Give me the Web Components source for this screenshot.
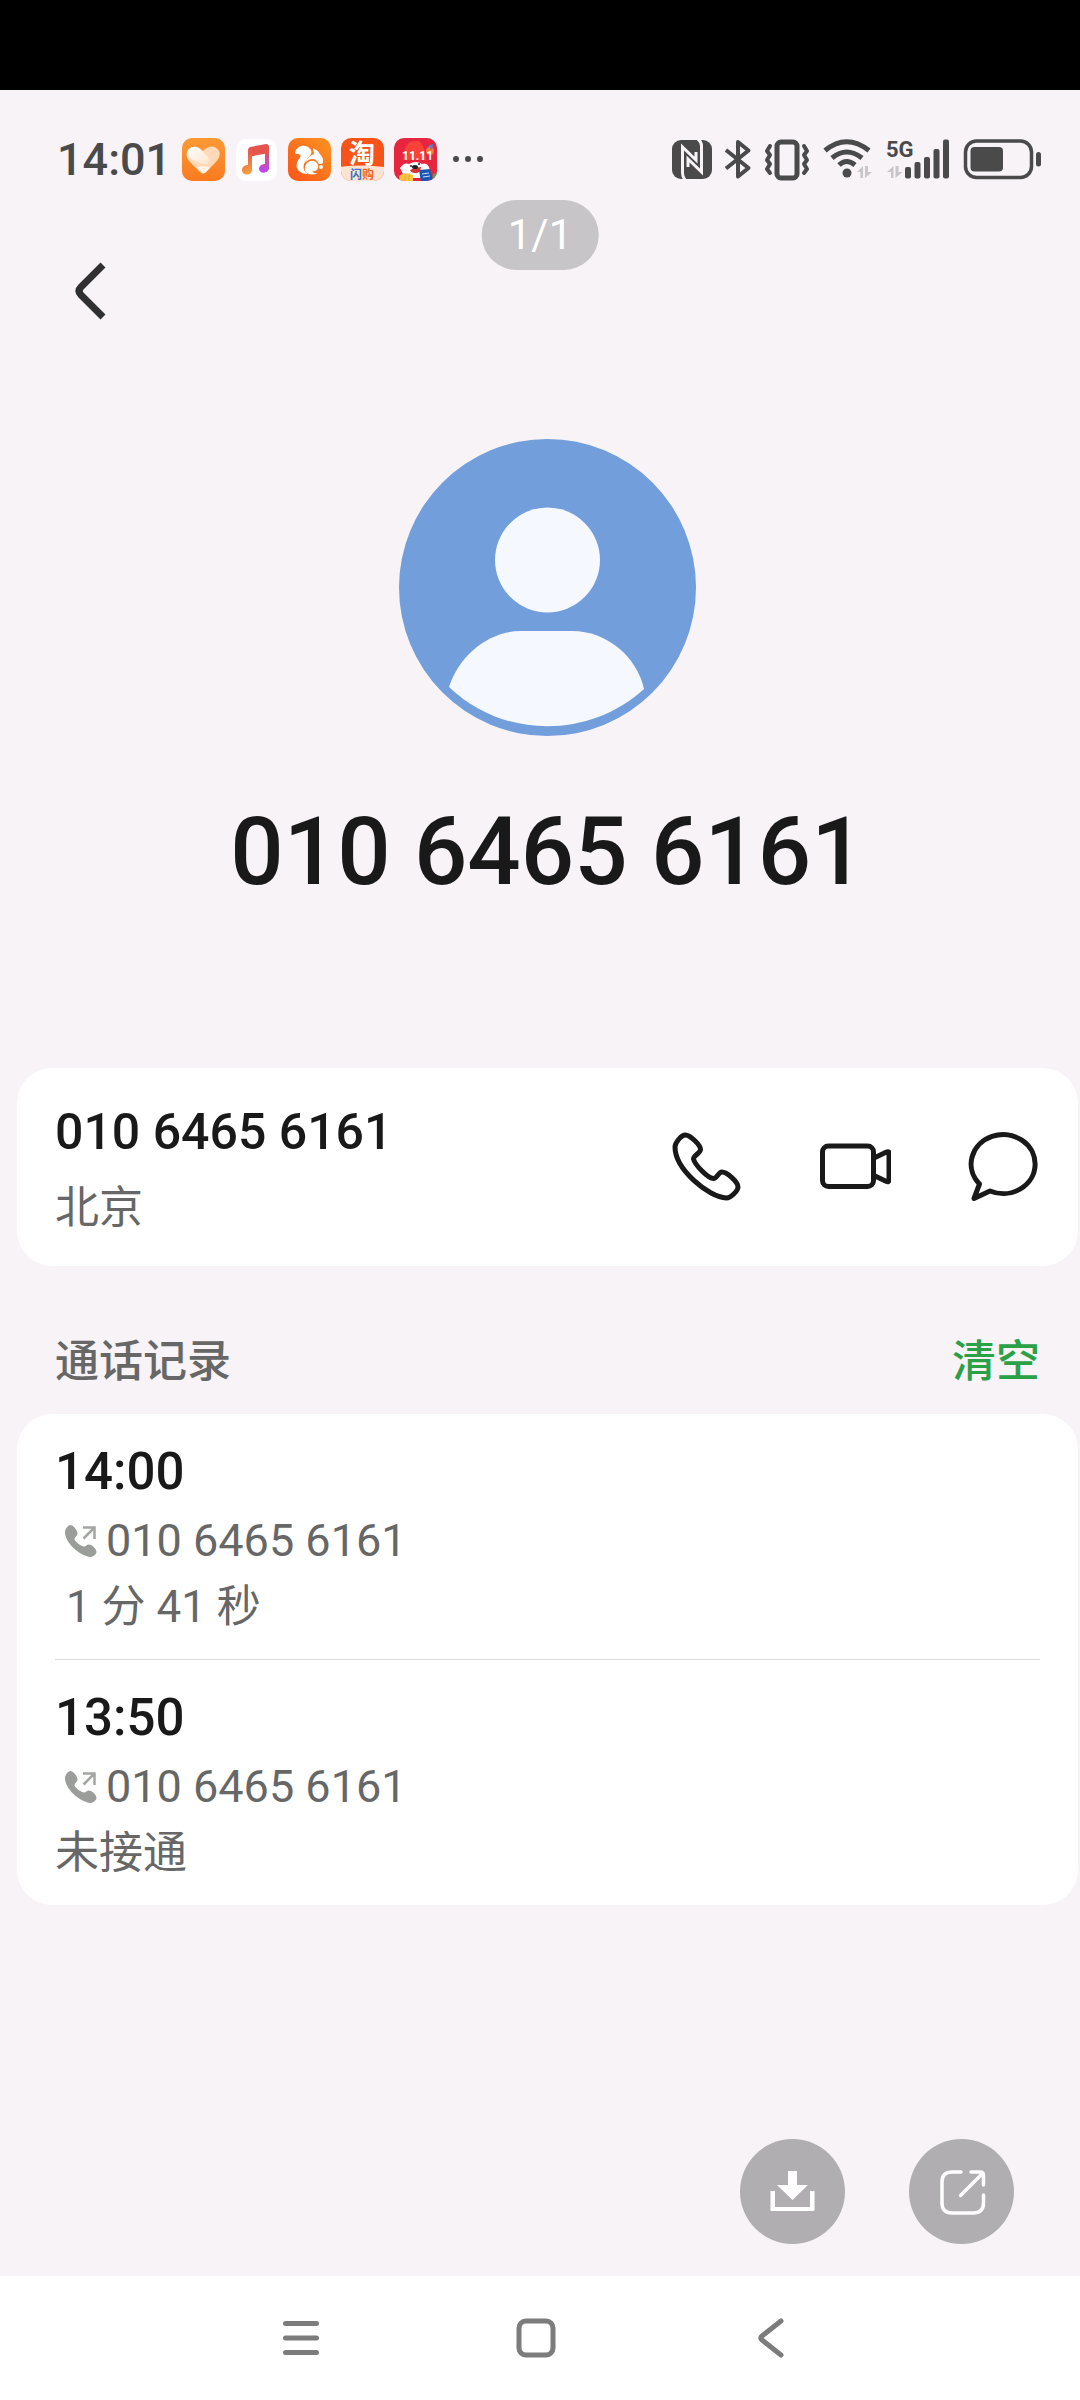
<!DOCTYPE html>
<html lang="zh-CN">
<head>
<meta charset="UTF-8">
<meta name="viewport" content="width=device-width, initial-scale=1">
<title>通话详情</title>
<style>
    :root {
        --bg: #f7f3f7;
        --ink: #181918;
        --muted: #666766;
        --status: #4a4a4a;
        --green: #2aa146;
    }
    body {
        margin: 0;
        background: var(--bg);
        color: var(--ink);
        font-family: Roboto, "Noto Sans CJK SC", sans-serif;
    }
</style>
</head>
<body>
<contact-page>
    <status-bar slot="status" time="14:01"></status-bar>
    <page-counter slot="counter">1/1</page-counter>
    <contact-hero>010 6465 6161</contact-hero>
    <contact-card>
        010 6465 6161
        <span slot="place">北京</span>
    </contact-card>
    <call-log heading="通话记录" action="清空">
        <call-entry time="14:00" number="010 6465 6161"> 1 分 41 秒</call-entry>
        <call-entry time="13:50" number="010 6465 6161">未接通</call-entry>
    </call-log>
    <float-actions slot="actions"></float-actions>
    <system-nav slot="nav"></system-nav>
</contact-page>

<script>
const buttonReset = `
    button {
        display: block;
        margin: 0;
        padding: 0;
        border: 0;
        background: none;
        color: inherit;
        font: inherit;
        cursor: pointer;
    }
    svg { display: block; }
`;

class ContactPage extends HTMLElement {
    connectedCallback() {
        this.attachShadow({ mode: 'open' });
        this.shadowRoot.innerHTML = `
            <style>
                ${buttonReset}
                :host {
                    display: flex;
                    flex-direction: column;
                    min-height: 100vh;
                }
                .notch { height: 90px; background: #000; }
                header { position: relative; padding: 60px 64px 116px; }
                main { flex: 1; padding: 0 2px 0 17px; }
                ::slotted(page-counter) {
                    position: absolute;
                    top: 0;
                    left: 50%;
                    transform: translateX(-50%);
                }
            </style>
            <div class="notch"></div>
            <slot name="status"></slot>
            <header>
                <slot name="counter"></slot>
                <button aria-label="返回">
                    <svg width="48" height="63" fill="none" stroke="#2f302f" stroke-width="7" stroke-linejoin="round">
                        <path d="M39 5 L17 27 Q13 31 17 35 L39 57"/>
                    </svg>
                </button>
            </header>
            <main><slot></slot></main>
            <slot name="actions"></slot>
            <slot name="nav"></slot>
        `;
    }
}

class StatusBar extends HTMLElement {
    connectedCallback() {
        this.attachShadow({ mode: 'open' });
        this.shadowRoot.innerHTML = `
            <style>
                :host {
                    display: flex;
                    justify-content: space-between;
                    align-items: center;
                    padding: 48px 38px 18px 57px;
                    color: var(--status);
                }
                svg { display: block; overflow: visible; }
                .left, .right, .apps { display: flex; align-items: center; }
                .left { gap: 10px; }
                .apps { gap: 9px; }
                .right { gap: 13px; }
                time { font-size: 45px; line-height: 44px; font-weight: 500; }
                text { font-family: Roboto, "Noto Sans CJK SC", sans-serif; font-weight: 700; }
            </style>
            <div class="left">
                <time>${this.getAttribute('time')}</time>
                <div class="apps">
                    <svg width="44" height="44">
                        <defs>
                            <linearGradient id="tile" x1="0" y1="0" x2="0" y2="1">
                                <stop offset="0" stop-color="#fa9a35"/><stop offset="1" stop-color="#fb7a20"/>
                            </linearGradient>
                            <linearGradient id="shine" x1="0" y1="0" x2="1" y2="1">
                                <stop offset="0" stop-color="#ffffff"/><stop offset="1" stop-color="#fff" stop-opacity="0.3"/>
                            </linearGradient>
                        </defs>
                        <rect x="1" y="0" width="43" height="43" rx="10" fill="url(#tile)"/>
                        <path d="M22 13 C27 7 35 7 38 13 C40 18 37 22 34 25 L25 34 Q22 37 19 34 L10 25 C6 21 4 17 7 12 C11 7 18 8 22 13Z" fill="#ffd9b8"/>
                        <path d="M8 11 C12 7 17 9 21 13 L27 19 C31 24 25 29 20 25 L10 21 C6 18 5 14 8 11Z" fill="url(#shine)"/>
                        <path d="M20 33 L16 29 C20 28 27 28 29 30 L25 34 Q22 37 20 33Z" fill="#fff" opacity="0.7"/>
                    </svg>
                    <svg width="44" height="44">
                        <defs>
                            <linearGradient id="note" x1="0.3" y1="0" x2="0.5" y2="1">
                                <stop offset="0.2" stop-color="#e85a4c"/><stop offset="1" stop-color="#f5a23a"/>
                            </linearGradient>
                            <linearGradient id="noteRight" x1="0" y1="0" x2="0" y2="1">
                                <stop offset="0.2" stop-color="#e9524f"/><stop offset="0.9" stop-color="#bd48ea"/>
                            </linearGradient>
                        </defs>
                        <rect x="2" y="1" width="41" height="42" rx="10" fill="#fff"/>
                        <path d="M14 12 Q14 10 16 9 L32 6 Q35 6 35 9 V15 L14 19Z" fill="#e5554d"/>
                        <path d="M14 12 H18 V32 C18 38 8 38 8 32 C8 28 12 27 14 27Z" fill="url(#note)"/>
                        <path d="M31 8 H35 V30 C35 36 25 36 25 31 C25 27 29 26 31 26Z" fill="url(#noteRight)"/>
                    </svg>
                    <svg width="44" height="44">
                        <defs>
                            <linearGradient id="browser" x1="0" y1="1" x2="1" y2="0">
                                <stop offset="0" stop-color="#f9541a"/><stop offset="1" stop-color="#fc9420"/>
                            </linearGradient>
                        </defs>
                        <rect x="1" y="0" width="43" height="43" rx="10" fill="url(#browser)"/>
                        <path d="M8 15 C9 7 20 5 24 12 C26 17 21 19 18 24 C15 29 17 34 21 36 C13 36 8 31 10 25 C11 21 15 19 13 17 C12 15 9 17 8 15Z" fill="#fff"/>
                        <path d="M27 16 L26 10 L31 13 C33 17 37 19 36 24 C36 26 34 26 32 26 C29 19 22 20 18 25 C20 20 23 18 27 16Z" fill="#fff"/>
                        <path d="M18 29 C19 22 29 20 31 27 C32 31 29 34 25 33 Q27 36 31 35 Q25 38 20 35 Q17 33 18 29Z" fill="#fff"/>
                        <circle cx="34" cy="29" r="2" fill="#fff"/>
                    </svg>
                    <svg width="44" height="44">
                        <defs>
                            <clipPath id="shopTile"><rect x="1" y="0" width="43" height="43" rx="10"/></clipPath>
                        </defs>
                        <g clip-path="url(#shopTile)">
                            <rect width="44" height="44" fill="#f8541a"/>
                            <path d="M0 29 Q22 26 44 29 V44 H0Z" fill="#fde3d3"/>
                        </g>
                        <text x="9" y="25" font-size="26" fill="#fff">淘</text>
                        <text x="10" y="41" font-size="12" fill="#3573c9">闪<tspan fill="#f0682c">购</tspan></text>
                    </svg>
                    <svg width="44" height="44">
                        <defs>
                            <clipPath id="saleTile"><rect x="1" y="0" width="43" height="43" rx="10"/></clipPath>
                        </defs>
                        <g clip-path="url(#saleTile)">
                            <rect width="44" height="44" fill="#e8253f"/>
                            <path d="M10 22 Q11 2 23 3 Q31 2 33 22Z" fill="#fa4238"/>
                            <circle cx="37" cy="13" r="4" fill="#f07a3a"/>
                            <path d="M35 8 L40 6 L39 12Z" fill="#4b86dd"/>
                            <path d="M7 30 Q11 24 16 26 Q23 22 29 26 Q35 24 37 32 L34 40 H12Z" fill="#fff"/>
                            <path d="M17 32 Q22 29 28 29 Q27 36 22 35 Q18 35 17 32Z" fill="#d93433"/>
                            <circle cx="18" cy="28" r="1" fill="#222"/>
                            <circle cx="26" cy="26" r="1" fill="#222"/>
                            <ellipse cx="22" cy="29" rx="3" ry="2" fill="#222"/>
                            <path d="M6 38 Q12 33 20 37 V44 H7Z" fill="#fbc544"/>
                            <path d="M12 37 V43 M16 37 V43" stroke="#f0a52c"/>
                            <path d="M26 32 L37 31 L40 42 L28 44Z" fill="#1d55b3"/>
                            <path d="M29 36 L36 35 M30 39 L37 38" stroke="#cfe0fa"/>
                            <path d="M40 36 L44 35 V44 H39Z" fill="#3fae55"/>
                        </g>
                        <text x="9" y="22" font-size="12" fill="#fff">11.11</text>
                    </svg>
                    <svg width="40" height="44" fill="currentColor">
                        <circle cx="10" cy="21" r="3"/><circle cx="22" cy="21" r="3"/><circle cx="34" cy="21" r="3"/>
                    </svg>
                </div>
            </div>
            <div class="right">
                <!-- NFC -->
                <svg width="40" height="42">
                    <rect x="0" y="1" width="40" height="39" rx="9" fill="currentColor"/>
                    <g fill="none" stroke="#f7f3f7" stroke-width="3">
                        <path d="M13 41 Q10.500 38 10.500 34 V8 L24 21 V13"/>
                        <path d="M26 0 Q29.500 3 29.500 7 V33 L16 20 V28"/>
                    </g>
                </svg>
                <!-- Bluetooth -->
                <svg width="26" height="42" fill="none" stroke="currentColor" stroke-width="4" stroke-linejoin="round">
                    <path d="M1 11 L23.500 29 L13 37.500 V3 L23.500 11.500 L1 29.500"/>
                </svg>
                <!-- Vibrate -->
                <svg width="46" height="42" fill="none" stroke="currentColor" stroke-width="4" stroke-linejoin="round" stroke-linecap="round">
                    <rect x="13" y="3" width="20" height="36" rx="4" stroke-width="5"/>
                    <path d="M6 7 L3 12 L6 16 L3 21 L6 25 L3 30 L6 34"/>
                    <path d="M40 7 L43 12 L40 16 L43 21 L40 25 L43 30 L40 34"/>
                </svg>
                <!-- Wi-Fi -->
                <svg width="50" height="42">
                    <g fill="none" stroke="currentColor" stroke-width="5">
                        <path d="M2 11.500 Q23.500 -6 46 11.500"/>
                        <path d="M9 19 Q23.500 7 39 19"/>
                        <path d="M16 26 Q23.500 19 32 26"/>
                    </g>
                    <circle cx="24" cy="34" r="4.500" fill="currentColor"/>
                    <path d="M40 27 V39 H37.500 V33 H34Z M42 27 V39 L49 33 H45 V27Z" fill="#c8c6c9"/>
                </svg>
                <!-- Signal -->
                <svg width="64" height="42" fill="currentColor">
                    <text x="0" y="18" font-size="22">5G</text>
                    <path d="M7.500 27 V39 H5 V33 H1Z M9.500 27 V39 L16.500 33 H12.500 V27Z" fill="#c8c6c9"/>
                    <rect x="19" y="28" width="6" height="11.500" rx="2"/>
                    <rect x="28.500" y="23" width="6" height="16.500" rx="2"/>
                    <rect x="38" y="18" width="6" height="21.500" rx="2"/>
                    <rect x="47.500" y="10" width="6" height="29.500" rx="2"/>
                    <rect x="57" y="0.500" width="6" height="39" rx="2"/>
                </svg>
                <!-- Battery -->
                <svg width="79" height="42">
                    <rect x="2.500" y="2" width="66" height="36.500" rx="11" fill="none" stroke="currentColor" stroke-width="3.500"/>
                    <rect x="7.500" y="8" width="32.500" height="24.500" rx="4" fill="currentColor"/>
                    <rect x="73" y="13" width="5" height="14.500" rx="2.500" fill="currentColor"/>
                </svg>
            </div>
        `;
    }
}

class PageCounter extends HTMLElement {
    connectedCallback() {
        this.attachShadow({ mode: 'open' });
        this.shadowRoot.innerHTML = `
            <style>
                :host {
                    display: block;
                    padding: 0 26px;
                    border-radius: 35px;
                    background: #c7c5c7;
                    color: #fff;
                    font-size: 42px;
                    line-height: 70px;
                }
            </style>
            <slot></slot>
        `;
    }
}

class ContactHero extends HTMLElement {
    connectedCallback() {
        this.attachShadow({ mode: 'open' });
        this.shadowRoot.innerHTML = `
            <style>
                :host {
                    display: flex;
                    flex-direction: column;
                    align-items: center;
                    gap: 60px;
                    padding-bottom: 160px;
                }
                h1 {
                    margin: 0;
                    font-size: 94px;
                    line-height: 112px;
                    font-weight: 500;
                }
            </style>
            <svg width="297" height="297" viewBox="0 0 297 297" aria-hidden="true">
                <circle cx="148.500" cy="148.500" r="148.500" fill="#729edb"/>
                <g fill="#f5f8ff">
                    <circle cx="148.500" cy="121" r="52.500"/>
                    <path d="M50 248 C60 216 90 192 122 192 H173 C208 192 238 218 245 250 C190 300 104 300 50 248Z"/>
                </g>
            </svg>
            <h1><slot></slot></h1>
        `;
    }
}

class ContactCard extends HTMLElement {
    connectedCallback() {
        this.attachShadow({ mode: 'open' });
        this.shadowRoot.innerHTML = `
            <style>
                ${buttonReset}
                :host {
                    display: flex;
                    justify-content: space-between;
                    align-items: center;
                    padding: 0 38px;
                    border-radius: 35px;
                    background: #fff;
                }
                .info {
                    display: flex;
                    flex-direction: column;
                    gap: 16px;
                    padding: 34px 0 28px;
                    line-height: 60px;
                }
                .number { font-size: 50px; font-weight: 500; }
                .place { font-size: 44px; color: var(--muted); }
                .buttons { display: flex; gap: 77px; }
                .buttons svg {
                    fill: none;
                    stroke: var(--ink);
                    stroke-width: 5;
                    stroke-linejoin: round;
                }
            </style>
            <div class="info">
                <div class="number"><slot></slot></div>
                <div class="place"><slot name="place"></slot></div>
            </div>
            <div class="buttons">
                <button aria-label="拨打电话">
                    <svg width="72" height="72">
                        <path d="M5 16 C5 12 11 4 15.500 4 C20 4 30.500 14 30.500 18.500 C30.500 22 23.500 24.500 23.500 28 C25 34 38 47.500 43.500 47.500 C47 47.500 48.500 41 52 41 C57 41 68 51 68 56 C68 60 60.500 67 56.500 67 C38 66 5 38 5 16Z"/>
                    </svg>
                </button>
                <button aria-label="视频通话">
                    <svg width="72" height="72">
                        <rect x="3.500" y="15" width="51" height="40.500" rx="6"/>
                        <path d="M54 27.500 L67.500 21 Q70 20 70 22 V49 Q70 51.500 67.500 50.500 L54 44"/>
                    </svg>
                </button>
                <button aria-label="发送短信">
                    <svg width="72" height="72">
                        <path d="M11.500 53 A32 29.500 0 1 1 22 60 L6 67.500Z"/>
                    </svg>
                </button>
            </div>
        `;
    }
}

class CallLog extends HTMLElement {
    connectedCallback() {
        this.attachShadow({ mode: 'open' });
        this.shadowRoot.innerHTML = `
            <style>
                ${buttonReset}
                :host { display: block; }
                .head {
                    display: flex;
                    justify-content: space-between;
                    padding: 66px 38px 22px;
                    font-size: 44px;
                    line-height: 60px;
                    font-weight: 500;
                }
                h2 { margin: 0; font: inherit; color: var(--muted); }
                button { color: var(--green); }
                .list {
                    padding: 0 38px;
                    border-radius: 35px;
                    background: #fff;
                }
                ::slotted(call-entry:not(:last-child)) { border-bottom: 1px solid #d9d9d9; }
            </style>
            <div class="head">
                <h2>${this.getAttribute('heading')}</h2>
                <button>${this.getAttribute('action')}</button>
            </div>
            <div class="list"><slot></slot></div>
        `;
    }
}

class CallEntry extends HTMLElement {
    connectedCallback() {
        this.attachShadow({ mode: 'open' });
        this.shadowRoot.innerHTML = `
            <style>
                :host {
                    display: block;
                    padding: 28px 0 19px;
                    color: var(--muted);
                }
                time {
                    display: block;
                    margin-bottom: 6px;
                    color: var(--ink);
                    font-size: 51px;
                    line-height: 60px;
                    font-weight: 500;
                }
                .number {
                    display: flex;
                    align-items: center;
                    gap: 8px;
                    padding-left: 9px;
                    font-size: 45px;
                    line-height: 66px;
                }
                .result {
                    font-size: 44px;
                    line-height: 66px;
                    white-space: pre;
                }
            </style>
            <time>${this.getAttribute('time')}</time>
            <div class="number">
                <svg width="34" height="34" aria-hidden="true">
                    <path fill="#9b9d9b" d="M1 8 C1 5 4 1 6.500 1 C9 1 13.500 6 13.500 9.500 C13.500 12 10.500 13 10.500 15.500 C12 18.500 17.500 22.500 20 22.500 C22 22.500 22.500 20.500 25 20.500 C28 20.500 32.500 25 32.500 28 C32.500 30 29 33 26.500 33 C16 32 1 19 1 8Z"/>
                    <path fill="none" stroke="#a3a5a3" stroke-width="2.500" d="M19 3.500 H30.500 V15 M30 4 L19.500 14.500"/>
                </svg>
                <span>${this.getAttribute('number')}</span>
            </div>
            <div class="result"><slot></slot></div>
        `;
    }
}

class FloatActions extends HTMLElement {
    connectedCallback() {
        this.attachShadow({ mode: 'open' });
        this.shadowRoot.innerHTML = `
            <style>
                ${buttonReset}
                :host {
                    display: flex;
                    justify-content: flex-end;
                    gap: 64px;
                    padding: 0 66px 32px;
                }
                button { border-radius: 50%; background: #b0aeb0; }
            </style>
            <button aria-label="下载">
                <svg width="105" height="105" fill="#fff">
                    <path d="M48 32 H57 V46 H68 L52.500 61 L37 46 H48Z"/>
                    <path d="M30.500 52 H35 V68 H70 V52 H74.500 V71 Q74.500 72 73.500 72 H31.500 Q30.500 72 30.500 71Z"/>
                </svg>
            </button>
            <button aria-label="分享">
                <svg width="105" height="105" fill="none" stroke="#fff" stroke-width="3.500" stroke-linecap="round" stroke-linejoin="round">
                    <path d="M52 33 H43 Q33 33 33 43 V64 Q33 74 43 74 H64 Q74.500 74 74.500 64 V56"/>
                    <path d="M62 33 H71 Q74.500 33 74.500 36.500 V46 M74 34 L51.500 56.500"/>
                </svg>
            </button>
        `;
    }
}

class SystemNav extends HTMLElement {
    connectedCallback() {
        this.attachShadow({ mode: 'open' });
        this.shadowRoot.innerHTML = `
            <style>
                ${buttonReset}
                :host { display: block; background: #fff; }
                nav {
                    display: flex;
                    justify-content: center;
                    gap: 187px;
                    padding: 38px 8px 38px 0;
                }
                svg {
                    fill: none;
                    stroke: #7c7c7c;
                    stroke-width: 5;
                    stroke-linecap: round;
                    stroke-linejoin: round;
                }
            </style>
            <nav>
                <button aria-label="最近任务">
                    <svg width="48" height="48"><path d="M8.500 9.500 H39.500 M8.500 24 H39.500 M8.500 38.500 H39.500"/></svg>
                </button>
                <button aria-label="主屏幕">
                    <svg width="48" height="48"><rect x="7" y="7" width="34" height="34" rx="7"/></svg>
                </button>
                <button aria-label="返回">
                    <svg width="48" height="48"><path d="M34 7 L15 22 Q12.500 24 15 26 L34 41"/></svg>
                </button>
            </nav>
        `;
    }
}

customElements.define('contact-page', ContactPage);
customElements.define('status-bar', StatusBar);
customElements.define('page-counter', PageCounter);
customElements.define('contact-hero', ContactHero);
customElements.define('contact-card', ContactCard);
customElements.define('call-log', CallLog);
customElements.define('call-entry', CallEntry);
customElements.define('float-actions', FloatActions);
customElements.define('system-nav', SystemNav);
</script>
</body>
</html>
